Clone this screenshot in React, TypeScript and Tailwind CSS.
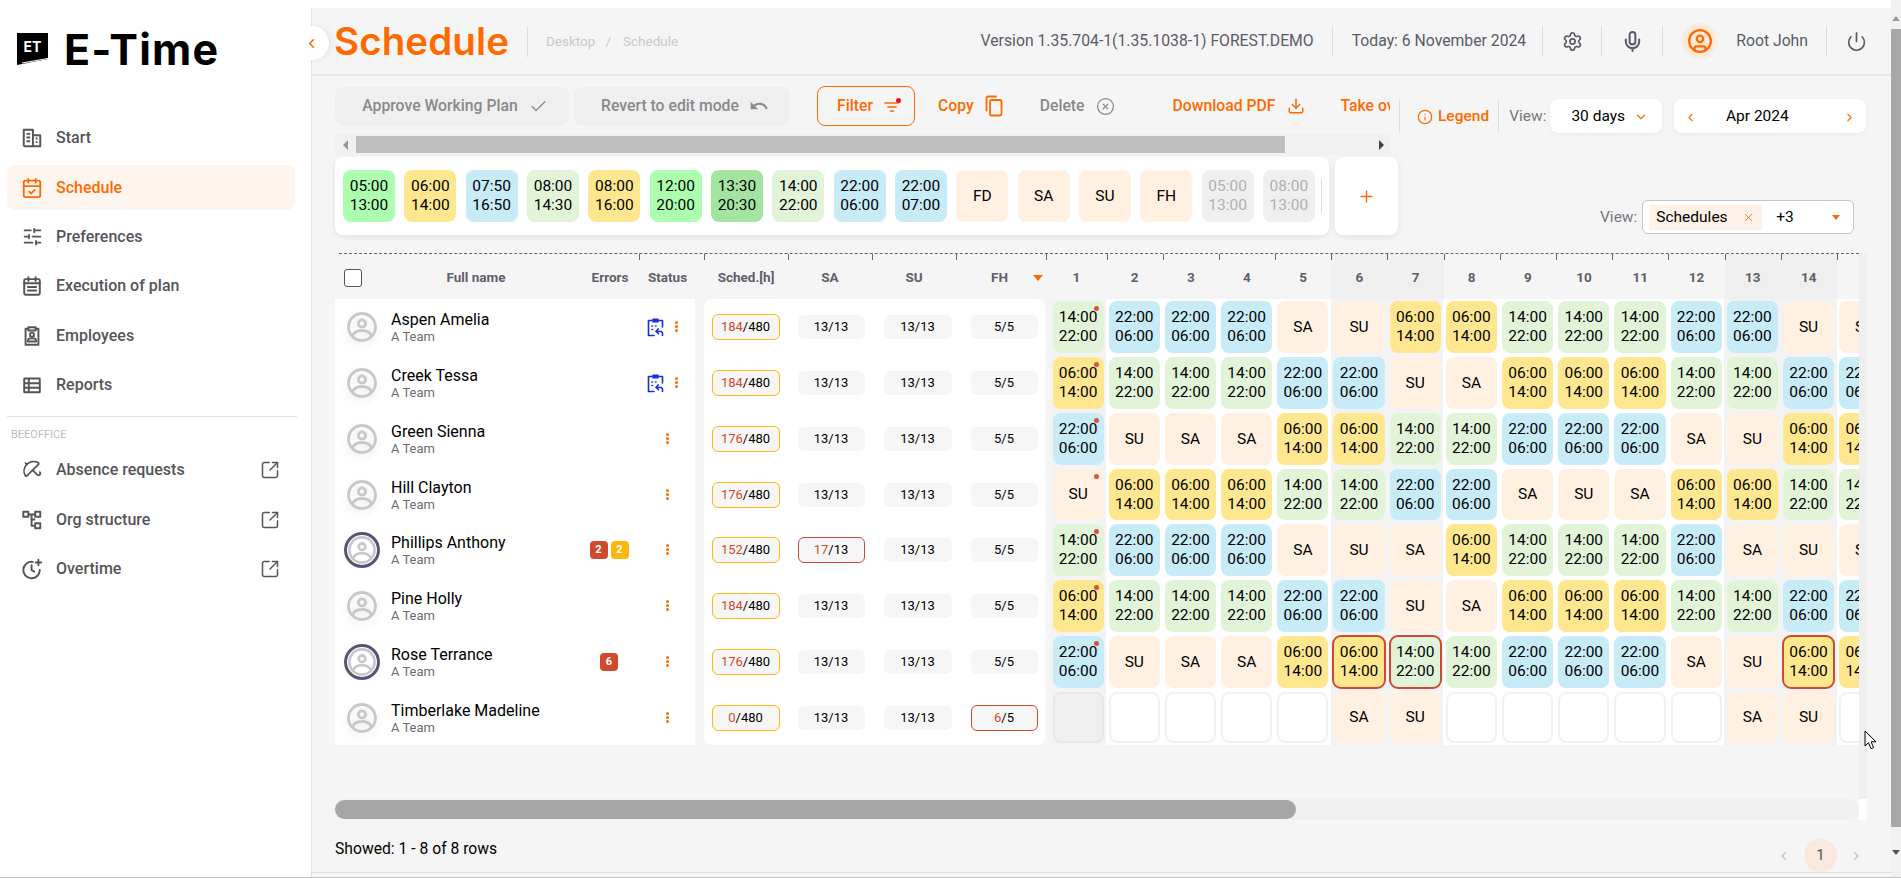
import React from "react";
import {
  CalendarCheck, SlidersHorizontal, SquareArrowOutUpRight, ChevronLeft, ChevronRight, ChevronDown,
  Settings, Mic, CircleUser, Power, Check, CircleX, Download, Info, Umbrella, Plus, X,
} from "lucide-react";

const ic = { fill: "none", stroke: "currentColor", strokeWidth: 2.1, strokeLinecap: "round" as const, strokeLinejoin: "round" as const };

const StartIcon = () => (
  <svg width="22" height="22" viewBox="0 0 24 24" {...ic} strokeLinecap="butt">
    <path d="M3 21V3h10v18M13 9h8v12H3" />
    <path d="M6 7.5h4M6 11.5h4M6 15.5h4M16 12.5h2M16 16.5h2" />
  </svg>
);
const ExecIcon = () => (
  <svg width="22" height="22" viewBox="0 0 24 24" {...ic}>
    <rect x="3.5" y="4.5" width="17" height="17" rx="1.5" />
    <path d="M8 2.5v4M16 2.5v4M3.5 9h17M7.5 13h9M7.5 17h9" />
  </svg>
);
const EmployeesIcon = () => (
  <svg width="22" height="22" viewBox="0 0 24 24" {...ic}>
    <path d="M8 4H5v17.5h14V4h-3" />
    <path d="M8 2.5h8v3.5H8z" />
    <circle cx="12" cy="10.5" r="2.2" />
    <path d="M7.5 18v-1c0-1.6 2-2.6 4.5-2.6s4.500 1 4.500 2.600v1z" />
  </svg>
);
const ReportsIcon = () => (
  <svg width="22" height="22" viewBox="0 0 24 24" {...ic} strokeLinecap="butt">
    <rect x="3.500" y="5" width="17" height="15" rx="0.5" />
    <path d="M3.500 10h17M3.500 15h17M8.500 5v15" />
  </svg>
);
const OrgIcon = () => (
  <svg width="22" height="22" viewBox="0 0 24 24" {...ic} strokeLinecap="butt">
    <rect x="2.500" y="3" width="5.500" height="5.500" />
    <rect x="15.500" y="3" width="5.500" height="5.500" />
    <rect x="15.500" y="15.500" width="5.500" height="5.500" />
    <path d="M8 6h7.500M11.500 6v12.300h4M11.500 11.500h4" />
  </svg>
);
const OvertimeIcon = () => (
  <svg width="22" height="22" viewBox="0 0 24 24" {...ic}>
    <path d="M13 4.200A9 9 0 1 0 20.500 13" />
    <path d="M11.500 8v5l3 2" />
    <path d="M19 2v6M16 5h6" />
  </svg>
);
const UndoIcon = () => (
  <svg width="20" height="20" viewBox="0 0 24 24" fill="currentColor" className="ml-[10px] shrink-0">
    <path d="M12.500 8c-2.650 0-5.050.99-6.900 2.600L2 7v9h9l-3.620-3.620c1.390-1.160 3.160-1.880 5.120-1.880 3.540 0 6.550 2.310 7.600 5.500l2.370-.78C21.080 11.030 17.150 8 12.500 8z" />
  </svg>
);
const CopyIcon = () => (
  <svg width="18" height="22" viewBox="0 0 18 22" fill="none" stroke="#ff6a00" strokeWidth="1.800" strokeLinecap="round" strokeLinejoin="round" className="ml-[11px] shrink-0">
    <rect x="5" y="5" width="11.500" height="15.500" rx="1.500" />
    <path d="M1.500 15.500V3a1.500 1.500 0 0 1 1.500-1.500h8" />
  </svg>
);
const ClipIcon = () => (
  <svg width="17" height="21" viewBox="0 0 17 21" fill="none" stroke="#1530d8" strokeWidth="1.600" strokeLinecap="round" strokeLinejoin="round" className="shrink-0">
    <path d="M5 3.500H1.500V18.500H7M12 3.500h3.500V10" />
    <path d="M6 2.200h5v2.500H6z" fill="#1530d8" />
    <path d="M15.500 18.500v-2a2 2 0 0 0-2-2H9M11.500 11.800 9 14.300l2.500 2.500" />
    <path d="M5 9h.5M8.500 9h.5M5 12.500h.5" />
  </svg>
);
const Avatar = ({ ring }: { ring?: boolean }) => (
  <div className={ring ? "w-[36px] h-[36px] rounded-full border-[3px] border-[#555770] flex items-center justify-center" : "w-[36px] h-[36px] flex items-center justify-center drop-shadow-[0_4px_4px_rgba(0,0,0,0.08)]"}>
    <svg width={ring ? 28 : 30} height={ring ? 28 : 30} viewBox="0 0 30 30" fill="none" stroke="#c8c8cc" strokeWidth="2.800">
      <circle cx="15" cy="15" r="13.500" />
      <circle cx="15" cy="11.500" r="3.600" />
      <path d="M5.500 24c1.500-4 5-5.500 9.500-5.500s8 1.500 9.500 5.500" />
    </svg>
  </div>
);

const Nav = ({ icon, label, active, ext, cls }: { icon: React.ReactNode; label: string; active?: boolean; ext?: boolean; cls: string }) => (
  <div className={`flex items-center mx-[7px] w-[288px] rounded-lg pl-[14px] ${cls} ${active ? "bg-[#fff5ef] text-[#ff6a00]" : "text-[#555558]"}`}>
    <span className="w-[22px] h-[22px] flex items-center justify-center shrink-0">{icon}</span>
    <span className="ml-[13px] text-[16px] font-medium whitespace-nowrap">{label}</span>
    {ext && <SquareArrowOutUpRight size={20} strokeWidth={1.800} className="ml-auto mr-[15px]" />}
  </div>
);

const Vr = ({ cls = "h-[31px]" }: { cls?: string }) => <div className={`w-px bg-[#dedede] shrink-0 ${cls}`} />;

type K = "g" | "y" | "b" | "p" | "bg" | "dg" | "o";
const kindBg: Record<K, string> = {
  g: "bg-[#e2f4d8]", y: "bg-[#ffe78f]", b: "bg-[#c8ebf8]", p: "bg-[#fff0e2]", bg: "bg-[#adffb0]", dg: "bg-[#a3e5a0]", o: "bg-[#efefef]",
};
const Time = ({ a, b }: { a: string; b?: string }) => (
  <div className="text-center leading-[19px]">
    <div>{a}</div>
    {b && <div>{b}</div>}
  </div>
);

const shifts: { a: string; b?: string; k: K }[] = [
  { a: "05:00", b: "13:00", k: "bg" }, { a: "06:00", b: "14:00", k: "y" }, { a: "07:50", b: "16:50", k: "b" },
  { a: "08:00", b: "14:30", k: "g" }, { a: "08:00", b: "16:00", k: "y" }, { a: "12:00", b: "20:00", k: "bg" },
  { a: "13:30", b: "20:30", k: "dg" }, { a: "14:00", b: "22:00", k: "g" }, { a: "22:00", b: "06:00", k: "b" },
  { a: "22:00", b: "07:00", k: "b" }, { a: "FD", k: "p" }, { a: "SA", k: "p" }, { a: "SU", k: "p" }, { a: "FH", k: "p" },
  { a: "05:00", b: "13:00", k: "o" }, { a: "08:00", b: "13:00", k: "o" },
];

const shiftMap: Record<string, { a: string; b?: string; k: K }> = {
  "14": { a: "14:00", b: "22:00", k: "g" },
  "22": { a: "22:00", b: "06:00", k: "b" },
  "06": { a: "06:00", b: "14:00", k: "y" },
  SA: { a: "SA", k: "p" },
  SU: { a: "SU", k: "p" },
};

type Row = {
  name: string; ring?: boolean; badges?: { n: number; c: string }[]; clip?: boolean; sched: string;
  sa?: string; fh?: string; days: string[]; sel?: number[];
};
const rows: Row[] = [
  { name: "Aspen Amelia", clip: true, sched: "184", days: "14 22 22 22 SA SU 06 06 14 14 14 22 22 SU SA".split(" ") },
  { name: "Creek Tessa", clip: true, sched: "184", days: "06 14 14 14 22 22 SU SA 06 06 06 14 14 22 22".split(" ") },
  { name: "Green Sienna", sched: "176", days: "22 SU SA SA 06 06 14 14 22 22 22 SA SU 06 06".split(" ") },
  { name: "Hill Clayton", sched: "176", days: "SU 06 06 06 14 14 22 22 SA SU SA 06 06 14 14".split(" ") },
  { name: "Phillips Anthony", ring: true, badges: [{ n: 2, c: "bg-[#cf4a2e]" }, { n: 2, c: "bg-[#fbb80b]" }], sched: "152", sa: "17", days: "14 22 22 22 SA SU SA 06 14 14 14 22 SA SU SA".split(" ") },
  { name: "Pine Holly", sched: "184", days: "06 14 14 14 22 22 SU SA 06 06 06 14 14 22 22".split(" ") },
  { name: "Rose Terrance", ring: true, badges: [{ n: 6, c: "bg-[#cf4a2e]" }], sched: "176", sel: [5, 6, 13], days: "22 SU SA SA 06 06 14 14 22 22 22 SA SU 06 06".split(" ") },
  { name: "Timberlake Madeline", sched: "0", fh: "6", days: "- - - - - SA SU - - - - - SA SU -".split(" ") },
];
const rowH = ["h-[56px]", "h-[56px]", "h-[56px]", "h-[55px]", "h-[56px]", "h-[56px]", "h-[56px]", "h-[55px]"];
const dayNums = Array.from({ length: 15 }, (_, i) => i + 1);
const isWk = (d: number) => d === 6 || d === 7 || d === 13 || d === 14;

const Tick = () => <div className="w-px h-[6px] bg-[#666] shrink-0" />;
const Head = ({ label, cls, extra }: { label: string; cls: string; extra?: React.ReactNode }) => (
  <div className={`flex flex-col h-full shrink-0 ${cls}`}>
    <Tick />
    <div className="flex-1 flex items-center justify-center pb-[4px] text-[13.500px] font-bold text-[#5f5f6b] whitespace-nowrap">
      {label}
      {extra}
    </div>
  </div>
);

const Pill = ({ n, d, hot, cls }: { n: string; d: string; hot?: "o" | "r"; cls: string }) => (
  <div className={`flex items-center justify-center text-[13px] bg-[#f6f6f6] text-black ${cls} ${hot ? "h-[26px] rounded-[6px] border" : "h-[24px] rounded-[6px]"} ${hot === "o" ? "border-[#fdb913]" : ""} ${hot === "r" ? "border-[#cf4a2e]" : ""}`}>
    {hot ? (
      <>
        <span className="text-[#cf4a2e]">{n}</span>
        <span>/{d}</span>
      </>
    ) : (
      <span>{n}/{d}</span>
    )}
  </div>
);

export default function App() {
  return (
    <div className="w-[1901px] h-[878px] flex bg-white overflow-hidden border-b border-[#c9c5c5] font-['Roboto',sans-serif]">
      {/* Sidebar */}
      <aside className="w-[311px] shrink-0 bg-white flex flex-col">
        <div className="flex items-center h-[98px] pl-[17px]">
          <svg width="31" height="32" viewBox="0 0 31 32">
            <path d="M0 0h31v26L0 32z" fill="#000" />
            <text x="15.500" y="18.500" textAnchor="middle" fontFamily="Inter, sans-serif" fontWeight="700" fontSize="14" fill="#fff">ET</text>
            <path d="M5 30 31 25.500" stroke="#fff" strokeWidth="1.200" />
          </svg>
          <span className="ml-[16px] text-[43px] leading-none font-bold text-black font-['Inter',sans-serif] tracking-[1.200px]">E-Time</span>
        </div>
        <div className="mt-[17px]" />
        <Nav cls="h-[45px] mb-[5px]" icon={<StartIcon />} label="Start" />
        <Nav cls="h-[45px] mb-[4px]" active icon={<CalendarCheck size={22} strokeWidth={2} />} label="Schedule" />
        <Nav cls="h-[45px] mb-[4px]" icon={<SlidersHorizontal size={21} strokeWidth={2} />} label="Preferences" />
        <Nav cls="h-[45px] mb-[5px]" icon={<ExecIcon />} label="Execution of plan" />
        <Nav cls="h-[45px] mb-[4px]" icon={<EmployeesIcon />} label="Employees" />
        <Nav cls="h-[45px]" icon={<ReportsIcon />} label="Reports" />
        <div className="mx-[7px] w-[290px] mt-[9px] border-t border-[#e2e2e2]" />
        <div className="pl-[11px] mt-[11px] h-[13px] leading-[13px] text-[11px] text-[#bdbdbd]">BEEOFFICE</div>
        <div className="mt-[6px]" />
        <Nav cls="h-[45px] mb-[5px]" ext icon={<Umbrella size={23} strokeWidth={1.900} className="-rotate-45" />} label="Absence requests" />
        <Nav cls="h-[45px] mb-[4px]" ext icon={<OrgIcon />} label="Org structure" />
        <Nav cls="h-[45px]" ext icon={<OvertimeIcon />} label="Overtime" />
      </aside>

      {/* Main */}
      <main className="flex-1 min-w-0 flex flex-col">
        <div className="h-[8px] bg-white shrink-0" />
        <div className="flex-1 min-h-0 flex flex-col bg-[#f5f5f5] border-l border-[#e2e2e2] relative">
          {/* collapse handle */}
          <div className="absolute left-[-5px] top-[18px] w-[22px] h-[34px] rounded-r-full bg-white shadow-[3px_0_6px_rgba(0,0,0,0.06)] flex items-center justify-start text-[#ff6a00]">
            <ChevronLeft size={15} strokeWidth={2.600} className="-ml-[3px]" />
          </div>

          {/* Header */}
          <header className="h-[68px] shrink-0 flex items-center border-b-2 border-[#e6e6e6] pl-[22px] text-[#5b5b68]">
            <span className="text-[38.500px] leading-none font-semibold text-[#ff6a00] font-['Inter',sans-serif] tracking-[0.100px] w-[174px] whitespace-nowrap">Schedule</span>
            <Vr cls="h-[31px] ml-[19px]" />
            <span className="ml-[18px] text-[13.500px] text-[#c9c9c9] whitespace-nowrap">Desktop</span>
            <span className="ml-[10px] text-[13.500px] text-[#c9c9c9]">/</span>
            <span className="ml-[12px] text-[13.500px] text-[#c9c9c9]">Schedule</span>
            <span className="ml-auto text-[15.750px] whitespace-nowrap">Version 1.35.704-1(1.35.1038-1) FOREST.DEMO</span>
            <Vr cls="h-[31px] ml-[18px]" />
            <span className="ml-[19px] text-[15.750px] whitespace-nowrap">Today: 6 November 2024</span>
            <Vr cls="h-[31px] ml-[16px]" />
            <Settings size={21} strokeWidth={1.900} className="ml-[19px]" />
            <Vr cls="h-[31px] ml-[18px] w-[2px]" />
            <Mic size={23} strokeWidth={2.100} className="ml-[19px]" />
            <Vr cls="h-[31px] ml-[18px]" />
            <div className="ml-[19px] w-[35px] h-[36px] rounded-full bg-[#fdeadb] flex items-center justify-center text-[#ff6a00]">
              <CircleUser size={26} strokeWidth={2.100} />
            </div>
            <span className="ml-[19px] text-[15.750px] whitespace-nowrap">Root John</span>
            <Vr cls="h-[31px] ml-[18px]" />
            <Power size={21} strokeWidth={1.900} className="ml-[19px] mr-[24px]" />
          </header>

          {/* Top controls */}
          <div className="flex shrink-0 pl-[23px]">
            <div className="w-[1064px] shrink-0 pt-[10px]">
              <div className="w-[1055px] h-[40px] flex items-center overflow-hidden text-[15.750px] font-medium whitespace-nowrap">
                <div className="w-[234px] h-[39px] shrink-0 rounded-lg bg-[#efefef] text-[#8a8a8a] flex items-center justify-center pl-[6px]">
                  Approve Working Plan <Check size={19} strokeWidth={1.600} className="ml-[11px] shrink-0" />
                </div>
                <div className="ml-[5px] w-[216px] h-[39px] shrink-0 rounded-lg bg-[#efefef] text-[#8a8a8a] flex items-center justify-center pl-[6px]">
                  Revert to edit mode <UndoIcon />
                </div>
                <div className="ml-[27px] w-[98px] h-[40px] shrink-0 rounded-lg border border-[#ff6a00] text-[#ff6a00] flex items-center justify-center pl-[7px]">
                  Filter
                  <svg width="18" height="16" viewBox="0 0 18 16" className="ml-[11px] shrink-0" fill="none" stroke="#ff6a00" strokeWidth="1.700" strokeLinecap="round">
                    <path d="M1 5h13M4 9h8M6.500 13h3" />
                    <circle cx="14.500" cy="2.500" r="2.500" fill="#e8121f" stroke="none" />
                  </svg>
                </div>
                <span className="ml-[23px] shrink-0 text-[#ff6a00]">Copy</span>
                <CopyIcon />
                <span className="ml-[37px] shrink-0 text-[#8a8a8a]">Delete</span>
                <CircleX size={19} strokeWidth={1.600} className="ml-[11px] shrink-0 text-[#8a8a8a]" />
                <span className="ml-[58px] shrink-0 text-[#ff6a00]">Download PDF</span>
                <Download size={18} strokeWidth={2} className="ml-[12px] shrink-0 text-[#ff6a00]" />
                <span className="ml-[35px] shrink-0 text-[#ff6a00]">Take over</span>
              </div>
              <div className="w-[1055px] h-[21px] mt-[8px] bg-[#f1f1f1] flex items-center">
                <div className="w-[21px] flex justify-center">
                  <div className="border-y-[5px] border-y-transparent border-r-[5px] border-r-[#999]" />
                </div>
                <div className="w-[929px] h-[17px] bg-[#bfbfbf]" />
                <div className="flex-1 flex justify-end pr-[6px]">
                  <div className="border-y-[5px] border-y-transparent border-l-[5px] border-l-[#444]" />
                </div>
              </div>
              <div className="flex mt-[2px]">
                <div className="w-[994px] h-[78px] bg-white rounded-lg shadow-[0_2px_6px_rgba(0,0,0,0.08)] flex items-center pl-[8px] overflow-hidden">
                  <div className="flex gap-[9.330px] shrink-0">
                    {shifts.map((s, i) => (
                      <div key={i} className={`w-[52px] h-[52px] rounded-lg flex items-center justify-center text-[15.500px] ${kindBg[s.k]} ${s.k === "o" ? "text-[#b0b0b0]" : "text-black"}`}>
                        <Time a={s.a} b={s.b} />
                      </div>
                    ))}
                  </div>
                  <div className="ml-[6px] w-px h-[32px] bg-[#dcdcdc] shrink-0" />
                </div>
                <div className="ml-[6px] w-[63px] h-[78px] bg-white rounded-lg shadow-[0_2px_6px_rgba(0,0,0,0.08)] flex items-center justify-center text-[#ff6a00]">
                  <Plus size={19} strokeWidth={1.700} />
                </div>
              </div>
            </div>
            <div className="flex-1 min-w-0 pt-[23px]">
              <div className="flex items-center h-[34px] text-[15.500px] whitespace-nowrap">
                <Vr cls="h-[32px]" />
                <Info size={16} strokeWidth={1.800} className="ml-[17px] mt-[1px] shrink-0 text-[#ff6a00]" />
                <span className="ml-[5px] pt-[2px] text-[#ff6a00] font-medium">Legend</span>
                <Vr cls="h-[32px] ml-[9px]" />
                <span className="ml-[10px] pt-[2px] text-[#77777f]">View:</span>
                <div className="ml-[4px] w-[112px] h-[34px] rounded-lg bg-white shadow-[0_1px_4px_rgba(0,0,0,0.06)] flex items-center pl-[21px] pt-[1px] text-black">
                  30 days <ChevronDown size={14} strokeWidth={2} className="ml-[9px] shrink-0 text-[#ff6a00]" />
                </div>
                <div className="ml-[12px] w-[192px] h-[34px] rounded-lg bg-white shadow-[0_1px_4px_rgba(0,0,0,0.06)] flex items-center justify-between px-[10px] pt-[2px] text-black">
                  <ChevronLeft size={13} strokeWidth={2} className="shrink-0 text-[#ff6a00]" />
                  <span className="mr-[26px]">Apr 2024</span>
                  <ChevronRight size={13} strokeWidth={2} className="shrink-0 text-[#ff6a00]" />
                </div>
              </div>
              <div className="flex items-center mt-[67px] h-[34px] ml-[201px] text-[15.500px] whitespace-nowrap">
                <span className="pt-[2px] text-[#77777f]">View:</span>
                <div className="ml-[5px] w-[212px] h-[34px] rounded-md border border-[#c4c4c4] bg-white flex items-center pl-[6px]">
                  <div className="w-[113px] h-[25px] bg-[#fff2e9] flex items-center pl-[7px] pt-[1px] text-black">
                    Schedules <X size={13} strokeWidth={1.600} className="ml-[14px] shrink-0 text-[#ff6a00]" />
                  </div>
                  <span className="ml-[14px] pt-[1px] text-black">+3</span>
                  <div className="ml-[38px] border-x-[4px] border-x-transparent border-t-[5px] border-t-[#ff6a00]" />
                </div>
              </div>
            </div>
          </div>

          {/* Table */}
          <div className="flex shrink-0 ml-[23px] mt-[18px]">
            <div className="w-[1524px] h-[546px] shrink-0 flex flex-col overflow-hidden">
              <div className="ml-[4px] border-t border-dashed border-[#666]" />
              <div className="flex h-[45px] shrink-0">
                <div className="w-[304px] shrink-0 flex items-center pt-[2px] text-[13.500px] font-bold text-[#5f5f6b]">
                  <div className="ml-[9px] w-[18px] h-[18px] rounded-[3px] border border-[#555] bg-white shrink-0" />
                  <span className="w-[228px] text-center">Full name</span>
                  <span className="w-[40px] text-center">Errors</span>
                </div>
                <Head label="Status" cls="w-[65px] [&>div:last-child]:pr-[8px]" />
                <Head label="Sched.[h]" cls="w-[84px]" />
                <Head label="SA" cls="w-[84px]" />
                <Head label="SU" cls="w-[84px]" />
                <Head
                  label="FH"
                  cls="w-[90px] [&>div:last-child]:justify-start [&>div:last-child]:pl-[35px]"
                  extra={<div className="ml-[25px] border-x-[5px] border-x-transparent border-t-[6px] border-t-[#ff6a00]" />}
                />
                <div className="flex-1 min-w-0 overflow-hidden flex">
                  {dayNums.map((d) => (
                    <Head key={d} label={d === 15 ? "" : String(d)} cls={`${d === 1 ? "w-[60.500px]" : "w-[56.200px]"} ${isWk(d) ? "bg-[#efefef]" : ""}`} />
                  ))}
                </div>
              </div>

              {/* Body */}
              <div className="flex h-[446px] overflow-hidden">
                <div className="w-[360px] shrink-0 bg-white">
                  {rows.map((r, i) => (
                    <div key={r.name} className={`flex items-center ${rowH[i]}`}>
                      <div className="ml-[9px] shrink-0"><Avatar ring={r.ring} /></div>
                      <div className="ml-[11px] w-[188px] shrink-0 whitespace-nowrap">
                        <div className="pt-[1px] text-[16px] leading-[19px] text-black">{r.name}</div>
                        <div className="text-[13px] leading-[16px] text-[#6b6b73]">A Team</div>
                      </div>
                      <div className="w-[60px] shrink-0 flex justify-center gap-[3px]">
                        {r.badges?.map((b, j) => (
                          <span key={j} className={`w-[18px] h-[18px] rounded-[4px] text-white text-[11px] font-bold flex items-center justify-center ${b.c}`}>{b.n}</span>
                        ))}
                      </div>
                      <div className={`w-[56px] shrink-0 flex items-center ${r.clip ? "pl-[8px] gap-[11px]" : "justify-center"}`}>
                        {r.clip && <ClipIcon />}
                        <div className="flex flex-col gap-[1px] mb-[1px]">
                          <span className="w-[3px] h-[3px] rounded-full bg-[#ff6a00]" />
                          <span className="w-[3px] h-[3px] rounded-full bg-[#ff6a00]" />
                          <span className="w-[3px] h-[3px] rounded-full bg-[#ff6a00]" />
                        </div>
                      </div>
                    </div>
                  ))}
                </div>
                <div className="ml-[9px] w-[341px] shrink-0 bg-white rounded-lg">
                  {rows.map((r, i) => (
                    <div key={r.name} className={`flex items-center pl-[7.500px] ${rowH[i]}`}>
                      <Pill n={r.sched} d="480" hot="o" cls="w-[68px] shrink-0" />
                      <Pill n={r.sa ?? "13"} d="13" hot={r.sa ? "r" : undefined} cls="w-[67px] ml-[18px] shrink-0" />
                      <Pill n="13" d="13" cls="w-[68px] ml-[19px] shrink-0" />
                      <Pill n={r.fh ?? "5"} d="5" hot={r.fh ? "r" : undefined} cls="w-[67px] ml-[19px] shrink-0" />
                    </div>
                  ))}
                </div>
                <div className="ml-[5px] flex-1 min-w-0 overflow-hidden bg-white">
                  {rows.map((r, i) => (
                    <div key={r.name} className={`flex ${rowH[i]}`}>
                      {r.days.map((d, j) => {
                        const s = shiftMap[d];
                        const dayNo = j + 1;
                        const shade = dayNo === 1 || isWk(dayNo) ? "bg-[#f3f3f3]" : "bg-white";
                        const sel = r.sel?.includes(j);
                        return (
                          <div key={j} className={`w-[56.200px] shrink-0 h-full py-[2px] px-[2.500px] ${shade}`}>
                            {s ? (
                              <div className={`relative h-full rounded-lg flex items-center justify-center text-[15.500px] text-black ${kindBg[s.k]} ${sel ? "outline-2 -outline-offset-1 outline-[#cf4a2e] z-10" : ""}`}>
                                <Time a={s.a} b={s.b} />
                                {j === 0 && <span className="absolute right-[5px] top-[5px] w-[5px] h-[5px] rounded-full bg-[#d9533c]" />}
                              </div>
                            ) : (
                              <div className={`h-full rounded-lg border-2 ${j === 0 ? "bg-[#efefef] border-[#e7e7e7]" : "bg-white border-[#f1f1f1]"}`} />
                            )}
                          </div>
                        );
                      })}
                    </div>
                  ))}
                </div>
              </div>
            </div>
            <div className="w-[8px] h-[546px] bg-[#efefef] rounded-t-md shrink-0" />
          </div>

          {/* Horizontal scrollbar */}
          <div className="flex shrink-0 ml-[23px]">
            <div className="w-[1524px] h-[21px] rounded-full bg-[#f0f0f0] flex items-center">
              <div className="w-[961px] h-[19px] rounded-full bg-[#a6a6a6]" />
            </div>
            <div className="w-[8px] h-[21px] bg-white" />
          </div>

          {/* Footer */}
          <div className="flex-1 min-h-0 flex flex-col">
            <div className="h-[53px] shrink-0 flex pl-[23px] border-b border-[#e2e2e2]">
              <span className="self-center pt-[5px] text-[15.700px] text-black">Showed: 1 - 8 of 8 rows</span>
              <div className="ml-auto mr-[28px] self-end flex items-center">
                <ChevronLeft size={14} strokeWidth={1.800} className="text-[#a8a8a8]" />
                <div className="ml-[13px] w-[33px] h-[33px] rounded-full bg-[#f8e8de] flex items-center justify-center text-[15px] text-[#555]">1</div>
                <ChevronRight size={14} strokeWidth={1.800} className="ml-[12px] text-[#a8a8a8]" />
              </div>
            </div>
          </div>

          {/* mouse pointer */}
          <svg className="absolute left-[1552px] top-[722px]" width="13" height="20" viewBox="0 0 13 20">
            <path d="M1 1v15l3.500-3.300 2.500 6 2.600-1.100-2.500-5.800H12z" fill="#fff" stroke="#000" strokeWidth="1" strokeLinejoin="round" />
          </svg>
        </div>
      </main>

      {/* Page scrollbar */}
      <div className="w-[10px] shrink-0 bg-[#f1f1f1] flex flex-col items-center">
        <div className="h-[29px] w-full flex items-center justify-center pt-[8px]">
          <div className="border-x-[4px] border-x-transparent border-b-[5px] border-b-[#9a9a9a]" />
        </div>
        <div className="w-full h-[798px] bg-[#a8a8a8]" />
        <div className="flex-1 w-full flex items-center justify-center">
          <div className="border-x-[4px] border-x-transparent border-t-[5px] border-t-[#555]" />
        </div>
      </div>
    </div>
  );
}
